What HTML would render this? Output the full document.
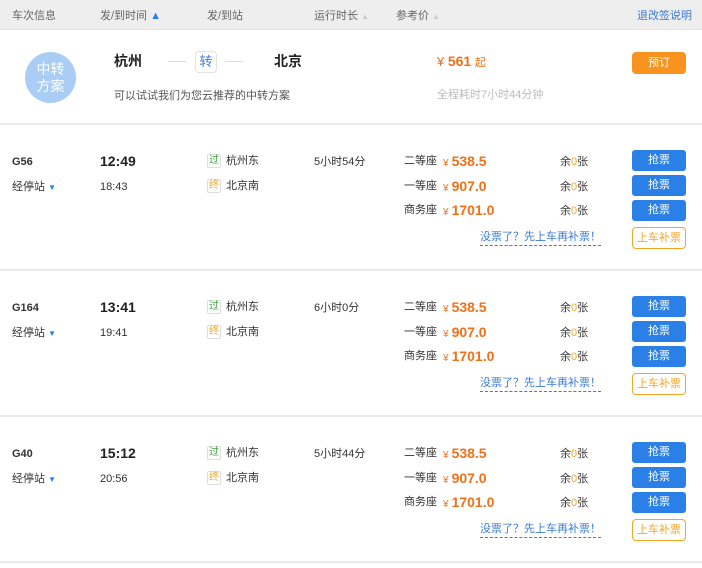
<!DOCTYPE html>
<html><head><meta charset="utf-8"><style>
*{margin:0;padding:0;box-sizing:border-box}
body{width:702px;height:568px;background:#fff;font-family:"Liberation Sans","Noto Sans CJK SC",sans-serif;font-size:11px;color:#333;position:relative;overflow:hidden}
.a{position:absolute;white-space:nowrap;line-height:14px}
.hd{position:absolute;left:0;top:0;width:702px;height:30px;background:#eee;border-bottom:1px solid #e3e3e3}
.hd .a{top:9px;color:#666}
.sep{position:absolute;left:0;width:702px;height:2px;background:#e9e9e9}
.btn{position:absolute;left:632px;width:54px;height:21px;border-radius:3px;background:#2b80e8;color:#fff;text-align:center;line-height:21px;font-size:11px}
.ob{position:absolute;left:632px;width:54px;height:22px;border-radius:4px;border:1px solid #f5a623;color:#f5a623;text-align:center;line-height:20px;font-size:11px;background:#fff}
.tag{display:inline-block;width:14px;height:14px;border:1px solid #ddd;border-radius:2px;font-size:10px;line-height:12px;text-align:center;margin-right:5px;vertical-align:top}
.pr{position:absolute;left:443px;color:#f07019;font-weight:bold;font-size:14px;line-height:16px;white-space:nowrap}
.pr i{font-style:normal;font-size:10px;font-weight:normal;margin-right:3px}
.lnk{color:#3a7bd5;border-bottom:1px dashed #3a7bd5;padding-bottom:2px}
</style></head><body>
<div class="hd">
<div class="a" style="left:12px">车次信息</div>
<div class="a" style="left:100px">发/到时间 <span style="color:#2b80e8">&#9650;</span></div>
<div class="a" style="left:207px">发/到站</div>
<div class="a" style="left:314px">运行时长 <span style="color:#ccc;font-size:8px">&#9650;</span></div>
<div class="a" style="left:396px">参考价 <span style="color:#ccc;font-size:8px">&#9650;</span></div>
<div class="a" style="left:637px;color:#3a7bd5">退改签说明</div>
</div>
<div style="position:absolute;left:25px;top:52px;width:51px;height:51px;border-radius:50%;background:#a9cdf5;color:#fff;font-size:14px;line-height:17px;text-align:center;padding-top:9px">中转<br>方案</div>
<div class="a" style="left:114px;top:54px;font-size:14px;font-weight:bold;color:#222">杭州</div>
<div style="position:absolute;left:168px;top:61px;width:18px;height:1px;background:#ddd"></div>
<div style="position:absolute;left:195px;top:51px;width:22px;height:22px;border:1px solid #e3e3e3;border-radius:4px;color:#3a7bd5;font-size:13px;text-align:center;line-height:20px">转</div>
<div style="position:absolute;left:225px;top:61px;width:18px;height:1px;background:#ddd"></div>
<div class="a" style="left:274px;top:54px;font-size:14px;font-weight:bold;color:#222">北京</div>
<div class="a" style="left:114px;top:89px;color:#555">可以试试我们为您云推荐的中转方案</div>
<div class="a" style="left:437px;top:53px;color:#f07019;font-size:13px;line-height:16px"><span style="font-size:13px">¥</span> <b style="font-size:14px">561</b> <span style="font-size:11px">起</span></div>
<div class="a" style="left:437px;top:88px;color:#bbb">全程耗时7小时44分钟</div>
<div style="position:absolute;left:632px;top:52px;width:54px;height:22px;border-radius:4px;background:#f7931e;color:#fff;text-align:center;line-height:22px">预订</div>
<div class="sep" style="top:123px"></div>

<div style="position:absolute;left:0;top:0;width:702px">
<div class="a" style="left:12px;top:155px;font-weight:bold">G56</div>
<div class="a" style="left:12px;top:180px">经停站 <span style="color:#2b80e8;font-size:8px">&#9660;</span></div>
<div class="a" style="left:100px;top:154px;font-size:14px;font-weight:bold;color:#222">12:49</div>
<div class="a" style="left:100px;top:180px">18:43</div>
<div class="a" style="left:207px;top:154px"><span class="tag" style="color:#3aa83a">过</span>杭州东</div>
<div class="a" style="left:207px;top:179px"><span class="tag" style="color:#f5a623">终</span>北京南</div>
<div class="a" style="left:314px;top:155px">5小时54分</div>
<div class="a" style="left:404px;top:154px">二等座</div><div class="pr" style="top:153px"><i>¥</i>538.5</div>
<div class="a" style="left:404px;top:179px">一等座</div><div class="pr" style="top:178px"><i>¥</i>907.0</div>
<div class="a" style="left:404px;top:203px">商务座</div><div class="pr" style="top:202px"><i>¥</i>1701.0</div>
<div class="a" style="left:560px;top:155px">余<span style="color:#f5a623">0</span>张</div>
<div class="a" style="left:560px;top:180px">余<span style="color:#f5a623">0</span>张</div>
<div class="a" style="left:560px;top:204px">余<span style="color:#f5a623">0</span>张</div>
<div class="a" style="left:480px;top:230px"><span class="lnk">没票了？先上车再补票！</span></div>
<div class="btn" style="top:150px">抢票</div><div class="btn" style="top:175px">抢票</div><div class="btn" style="top:200px">抢票</div>
<div class="ob" style="top:227px">上车补票</div>
<div class="sep" style="top:269px"></div>
</div>
<div style="position:absolute;left:0;top:146px;width:702px">
<div class="a" style="left:12px;top:155px;font-weight:bold">G164</div>
<div class="a" style="left:12px;top:180px">经停站 <span style="color:#2b80e8;font-size:8px">&#9660;</span></div>
<div class="a" style="left:100px;top:154px;font-size:14px;font-weight:bold;color:#222">13:41</div>
<div class="a" style="left:100px;top:180px">19:41</div>
<div class="a" style="left:207px;top:154px"><span class="tag" style="color:#3aa83a">过</span>杭州东</div>
<div class="a" style="left:207px;top:179px"><span class="tag" style="color:#f5a623">终</span>北京南</div>
<div class="a" style="left:314px;top:155px">6小时0分</div>
<div class="a" style="left:404px;top:154px">二等座</div><div class="pr" style="top:153px"><i>¥</i>538.5</div>
<div class="a" style="left:404px;top:179px">一等座</div><div class="pr" style="top:178px"><i>¥</i>907.0</div>
<div class="a" style="left:404px;top:203px">商务座</div><div class="pr" style="top:202px"><i>¥</i>1701.0</div>
<div class="a" style="left:560px;top:155px">余<span style="color:#f5a623">0</span>张</div>
<div class="a" style="left:560px;top:180px">余<span style="color:#f5a623">0</span>张</div>
<div class="a" style="left:560px;top:204px">余<span style="color:#f5a623">0</span>张</div>
<div class="a" style="left:480px;top:230px"><span class="lnk">没票了？先上车再补票！</span></div>
<div class="btn" style="top:150px">抢票</div><div class="btn" style="top:175px">抢票</div><div class="btn" style="top:200px">抢票</div>
<div class="ob" style="top:227px">上车补票</div>
<div class="sep" style="top:269px"></div>
</div>
<div style="position:absolute;left:0;top:292px;width:702px">
<div class="a" style="left:12px;top:155px;font-weight:bold">G40</div>
<div class="a" style="left:12px;top:180px">经停站 <span style="color:#2b80e8;font-size:8px">&#9660;</span></div>
<div class="a" style="left:100px;top:154px;font-size:14px;font-weight:bold;color:#222">15:12</div>
<div class="a" style="left:100px;top:180px">20:56</div>
<div class="a" style="left:207px;top:154px"><span class="tag" style="color:#3aa83a">过</span>杭州东</div>
<div class="a" style="left:207px;top:179px"><span class="tag" style="color:#f5a623">终</span>北京南</div>
<div class="a" style="left:314px;top:155px">5小时44分</div>
<div class="a" style="left:404px;top:154px">二等座</div><div class="pr" style="top:153px"><i>¥</i>538.5</div>
<div class="a" style="left:404px;top:179px">一等座</div><div class="pr" style="top:178px"><i>¥</i>907.0</div>
<div class="a" style="left:404px;top:203px">商务座</div><div class="pr" style="top:202px"><i>¥</i>1701.0</div>
<div class="a" style="left:560px;top:155px">余<span style="color:#f5a623">0</span>张</div>
<div class="a" style="left:560px;top:180px">余<span style="color:#f5a623">0</span>张</div>
<div class="a" style="left:560px;top:204px">余<span style="color:#f5a623">0</span>张</div>
<div class="a" style="left:480px;top:230px"><span class="lnk">没票了？先上车再补票！</span></div>
<div class="btn" style="top:150px">抢票</div><div class="btn" style="top:175px">抢票</div><div class="btn" style="top:200px">抢票</div>
<div class="ob" style="top:227px">上车补票</div>
<div class="sep" style="top:269px"></div>
</div>
</body></html>
